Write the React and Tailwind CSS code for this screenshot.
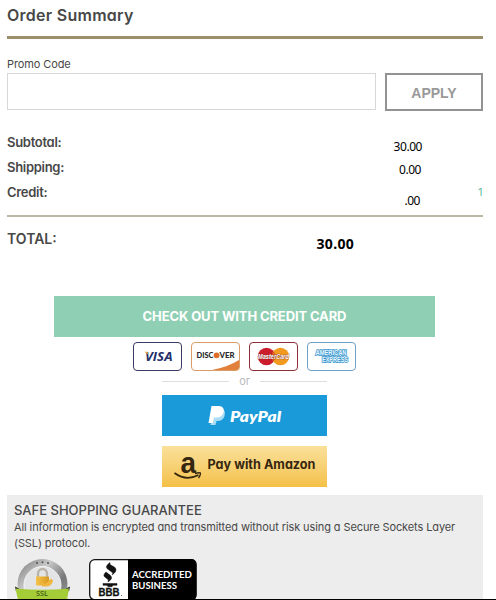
const cardBase = "flex h-[29px] w-[49px] items-center justify-center overflow-hidden rounded-[4px] border bg-white";

function Row({ label, value, valueClass }) {
  return (
    <div className="flex h-[25px] items-start justify-between text-[13px] leading-[25px]">
      <span className="font-semibold tracking-[-0.3px] text-[#484848]">{label}</span>
      <span className={"font-['Noto_Sans'] text-[12px] tracking-[-0.45px] text-black " + valueClass}>{value}</span>
    </div>
  );
}

function Visa() {
  return (
    <div className={cardBase + " border-[#3b3a62]"}>
      <svg width="47" height="27" viewBox="0 0 47 27">
        <text x="11" y="18" fontSize="13" fontWeight="700" fontStyle="italic" fontFamily="Open Sans, sans-serif" fill="#25306b" textLength="27.500" lengthAdjust="spacingAndGlyphs">VISA</text>
        <path d="M10.500 8.700h3l1 3z" fill="#e3a33d" />
      </svg>
    </div>
  );
}

function Discover() {
  return (
    <div className={cardBase + " border-[#dc9c67]"}>
      <svg width="47" height="27" viewBox="0 0 47 27">
        <path d="M20 27Q36 24 47 17V27z" fill="#e0803b" />
        <g fontSize="8" fontWeight="900" fontFamily="Lato, sans-serif" fill="#27272b">
          <text x="4.500" y="15" textLength="17" lengthAdjust="spacingAndGlyphs">DISC</text>
          <text x="27.500" y="15" textLength="15" lengthAdjust="spacingAndGlyphs">VER</text>
        </g>
        <circle cx="24.600" cy="12.300" r="2.900" fill="#dc6c27" />
      </svg>
    </div>
  );
}

function MasterCard() {
  return (
    <div className={cardBase + " border-[#8b3039]"}>
      <svg width="47" height="27" viewBox="0 0 47 27">
        <circle cx="16.500" cy="13.500" r="8.700" fill="#cb1d2b" />
        <circle cx="30.500" cy="13.500" r="8.700" fill="#f29a20" />
        <path d="M23.500 8.300a8.700 8.700 0 0 1 0 10.400a8.700 8.700 0 0 1 0-10.400z" fill="#dc5727" />
        <text x="8" y="16.300" fontSize="7" fontWeight="700" fontStyle="italic" fontFamily="Liberation Sans, sans-serif" fill="#fff" stroke="#863127" strokeWidth="0.700" paintOrder="stroke" textLength="31" lengthAdjust="spacingAndGlyphs">MasterCard</text>
      </svg>
    </div>
  );
}

function Amex() {
  return (
    <div className={cardBase + " border-[#6f9fc4]"}>
      <svg width="47" height="27" viewBox="0 0 47 27" fontSize="6.500" fontWeight="700" fontFamily="Liberation Sans, sans-serif" fill="#e8f6fd" stroke="#3c98cf" strokeWidth="1.700" paintOrder="stroke">
        <text x="7.500" y="12.300" textLength="31" lengthAdjust="spacingAndGlyphs">AMERICAN</text>
        <text x="14" y="19.300" textLength="26" lengthAdjust="spacingAndGlyphs">EXPRESS</text>
      </svg>
    </div>
  );
}

function PayPalLogo() {
  return (
    <svg width="165" height="41" viewBox="0 0 165 41">
      <path d="M52 14h8q4 1 2.500 7q-1.500 5-7 5h-1l-1 4h-5z" fill="#a9dcf5" />
      <path d="M49.500 11h7.500q6 .5 4.500 6.500q-1.500 5-7 5h-2.500l-1.200 5.500H46.500z" fill="#fff" />
      <text x="68" y="26.500" fontSize="15" fontWeight="800" fontStyle="italic" fontFamily="Lato, sans-serif" fill="#fff" textLength="51" lengthAdjust="spacingAndGlyphs">PayPal</text>
    </svg>
  );
}

function AmazonLogo() {
  return (
    <svg className="overflow-visible" width="165" height="41" viewBox="0 0 165 41">
      <text x="18.500" y="26.500" fontSize="30" fontWeight="700" fontFamily="Liberation Sans, sans-serif" fill="#35260f" textLength="15.500" lengthAdjust="spacingAndGlyphs">a</text>
      <path d="M12.500 27Q24 35.500 36.500 29" fill="none" stroke="#35260f" strokeWidth="1.700" />
      <path d="M33 27.500q5.500-1.500 5.500 0q0 1.800-2 4.500" fill="none" stroke="#35260f" strokeWidth="1.300" />
      <text x="45.500" y="23" fontSize="13" fontWeight="700" fontFamily="Inter, sans-serif" fill="#35260f" textLength="108" lengthAdjust="spacingAndGlyphs">Pay with Amazon</text>
    </svg>
  );
}

function SslSeal() {
  return (
    <svg width="56" height="41" viewBox="0 0 56 41">
      <defs>
        <linearGradient id="metal" x1="0" x2="1" y1="0" y2="1">
          <stop offset="0" stopColor="#777" />
          <stop offset=".35" stopColor="#c8c8c8" />
          <stop offset=".65" stopColor="#777" />
          <stop offset="1" stopColor="#aaa" />
        </linearGradient>
        <linearGradient id="gold" x1="0" x2="1">
          <stop offset="0" stopColor="#f6c34a" />
          <stop offset="1" stopColor="#d99920" />
        </linearGradient>
      </defs>
      <circle cx="28.500" cy="25" r="25" fill="url(#metal)" />
      <circle cx="28.500" cy="26" r="18.500" fill="#e3e4e6" stroke="#f5f5f5" strokeWidth="1" />
      <g fill="#555"><circle cx="23" cy="4" r="1" /><circle cx="28.500" cy="3.200" r="1" /><circle cx="34" cy="4" r="1" /></g>
      <path d="M24 18v-3.500a4.500 4.500 0 0 1 9 0V18" fill="none" stroke="#b9b3aa" strokeWidth="2.300" />
      <path d="M22 17.500h13v9H22z" fill="url(#gold)" />
      <path d="M28 22.500l3 3 6-6 2 2q-1 6-7 6h-4z" fill="#efb640" />
      <path d="M1 27.500l4 2-3 3zM56 27.500l-4 2 3 3z" fill="#222" />
      <path d="M1.500 29.500Q28.500 32 55 29.500L53 41H4z" fill="#a3cc37" />
      <text x="22" y="37" fontSize="7.500" fontWeight="600" fontFamily="Open Sans, sans-serif" fill="#3f5a19" textLength="12" lengthAdjust="spacingAndGlyphs">SSL</text>
    </svg>
  );
}

function BbbSeal() {
  return (
    <svg width="108" height="41" viewBox="0 0 108 41">
      <rect x=".7" y=".7" width="106.300" height="40" rx="5" fill="#fff" stroke="#111" strokeWidth="1.300" />
      <path d="M39 0h63q5.500 0 5.500 5.500V36q0 5-4.500 5H39z" fill="#000" />
      <path d="M21 3.500q-5 3.500-3 6l6 4.500q-.5 1-1 2q6-4 3-7.500l-5-3zM17 13q-4 3.500-.5 5.500l3 2.500q-.5 1-.5 2q5.500-3.500 2.500-6.500zM14 24.500h14v1.800h-4l-1 1.500h-4l-1-1.500h-4z" fill="#111" stroke="#111" strokeWidth=".5" />
      <text x="9.500" y="37" fontSize="10.500" fontWeight="700" fontFamily="Liberation Sans, sans-serif" fill="#111" stroke="#111" strokeWidth=".3" textLength="21" lengthAdjust="spacingAndGlyphs">BBB</text>
      <circle cx="32.500" cy="36.500" r=".6" fill="#555" />
      <g fontSize="9.600" fontWeight="700" fontFamily="Lato, sans-serif" fill="#fff">
        <text x="43" y="19" textLength="60" lengthAdjust="spacingAndGlyphs">ACCREDITED</text>
        <text x="43" y="30" textLength="45" lengthAdjust="spacingAndGlyphs">BUSINESS</text>
      </g>
    </svg>
  );
}

export default function App() {
  return (
    <main className="flex h-[600px] w-[496px] flex-col overflow-hidden border-b border-black bg-white pl-[7px] font-['Inter',sans-serif] text-[#484848] [font-feature-settings:'cv11']">
      <div className="flex w-[476px] flex-col">
        <h1 className="h-9 text-[16px] leading-[30px] font-semibold tracking-[0.27px]">Order Summary</h1>
        <div className="h-[3px] bg-[#9b8f6c]" />
        <label htmlFor="promo" className="mt-[17px] h-[17px] text-[11px] leading-[17px] tracking-[-0.1px]">Promo Code</label>
        <div className="flex justify-between">
          <input id="promo" className="h-[37px] w-[369px] border border-[#d8d8d8] bg-white px-2 text-sm outline-none" />
          <button className="h-[38px] w-[98px] border-2 border-[#929292] font-['Liberation_Sans',sans-serif] text-[14px] leading-[36px] font-bold text-[#999]">APPLY</button>
        </div>
        <section className="mt-[19px] flex h-[87px] flex-col border-b-2 border-[#bbb7a6]">
          <Row label="Subtotal:" value="30.00" valueClass="mr-[61px] pt-1" />
          <Row label="Shipping:" value="0.00" valueClass="mr-[62px] pt-[2px]" />
          <div className="flex h-[25px] items-start text-[13px] leading-[25px]">
            <span className="flex-1 font-semibold tracking-[-0.3px]">Credit:</span>
            <span className="mr-[58px] pt-2 font-['Noto_Sans'] text-[12px] tracking-[-0.45px] text-black">.00</span>
            <span className="w-[5px] text-[11px] text-[#65bea2]">1</span>
          </div>
        </section>
        <section className="flex h-[79px] items-start justify-between pt-[8px]">
          <span className="text-[14px] leading-[27px] font-semibold">TOTAL:</span>
          <span className="mr-[129px] pt-[5px] font-['Noto_Sans'] text-[14px] leading-[27px] font-bold tracking-[0.3px] text-black">30.00</span>
        </section>
      </div>
      <div className="ml-[47px] flex w-[381px] flex-col items-center">
        <button className="h-[41px] w-full bg-[#8fcfb3] text-[13px] leading-[41px] font-bold tracking-[-0.12px] text-white">CHECK OUT WITH CREDIT CARD</button>
        <div className="mt-[5px] flex gap-[9px]">
          <Visa /><Discover /><MasterCard /><Amex />
        </div>
        <div className="flex h-[24px] w-[165px] items-start gap-[10px] pt-[2px] text-[11px] leading-[16px] text-[#bbb]">
          <span className="mt-[8px] h-px flex-1 bg-[#ddd]" />
          <span>or</span>
          <span className="mt-[8px] h-px flex-1 bg-[#ddd]" />
        </div>
        <button className="h-[41px] w-[165px] bg-[#1b9ad9]"><PayPalLogo /></button>
        <button className="mt-[10px] h-[41px] w-[165px] bg-linear-to-b from-[#fae09a] to-[#f4c145]"><AmazonLogo /></button>
      </div>
      <section className="mt-2 h-[104px] w-[476px] shrink-0 bg-[#ededed] pt-[7px] pl-[7px]">
        <h2 className="text-[13px] leading-[17px] font-medium">SAFE SHOPPING GUARANTEE</h2>
        <p className="w-[460px] text-[11px] leading-[16px] tracking-[-0.1px] text-[#484848]">All information is encrypted and transmitted without risk using a Secure Sockets Layer<br />(SSL) protocol.</p>
        <div className="mt-[8px] flex gap-[19px]">
          <SslSeal /><BbbSeal />
        </div>
      </section>
    </main>
  );
}
